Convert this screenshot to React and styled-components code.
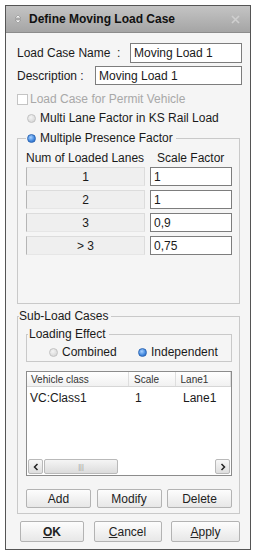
import styled, { createGlobalStyle, css } from "styled-components";

const Global = createGlobalStyle`
  body {
    margin: 0;
    background: #ffffff;
    font-family: "Liberation Sans", Arial, sans-serif;
  }
`;

const Dialog = styled.div`
  margin: 5px;
  width: 246px;
  height: 545px;
  box-sizing: border-box;
  border: 1px solid #555;
  background: #f5f5f5;
  display: flex;
  flex-direction: column;
  font-size: 12px;
  color: #1a1a1a;
`;

const TitleBar = styled.div`
  height: 26px;
  display: flex;
  align-items: center;
  padding: 0 10px 0 8px;
  background: linear-gradient(#c4c4c4, #a5a5a5);
  border-bottom: 1px solid #8c8c8c;
  font-weight: bold;
  font-size: 12px;
  color: #111;
`;

const TitleText = styled.span`
  margin-left: 7px;
  flex: 1;
`;

const Body = styled.div`
  flex: 1;
  display: flex;
  flex-direction: column;
  padding: 10px 8px 0 11px;
`;

const Row = styled.div`
  display: flex;
  align-items: center;
  height: ${(p) => p.h || 20}px;
  margin-top: ${(p) => p.mt || 0}px;
  padding-left: ${(p) => p.pl || 0}px;
`;

const Label = styled.span`
  width: ${(p) => p.w}px;
  flex: none;
  white-space: pre;
`;

const Input = styled.div`
  flex: 1;
  height: 100%;
  box-sizing: border-box;
  border: 1px solid #7d7d7d;
  background: #fff;
  padding: 0 3px;
  display: flex;
  align-items: center;
`;

const CheckBox = styled.span`
  width: 11px;
  height: 11px;
  box-sizing: border-box;
  border: 1px solid #c4c4c4;
  background: #fff;
  margin-right: 2px;
`;

const Disabled = styled.span`
  color: #a8a8a8;
`;

const Radio = styled.span`
  width: 9px;
  height: 9px;
  border-radius: 50%;
  box-sizing: border-box;
  flex: none;
  margin-right: 4px;
  ${(p) =>
    p.on
      ? css`
          border: 1px solid #2f68b5;
          background: radial-gradient(circle at 40% 35%, #a9d1ff, #3f86dd 60%, #2a62b8);
        `
      : css`
          border: 1px solid #c2c2c2;
          background: radial-gradient(circle at 40% 35%, #f4f4f4, #d0d0d0);
        `}
`;

const Group = styled.fieldset`
  margin: ${(p) => p.mt || 0}px ${(p) => p.mr || 0}px 0 0;
  padding: 0 ${(p) => p.pr ?? 7}px ${(p) => p.pb || 0}px ${(p) => p.pl || 8}px;
  min-width: 0;
  border: 1px solid #c9c9c9;
  display: flex;
  flex-direction: column;
`;

const Legend = styled.legend`
  padding: 0 3px 0 ${(p) => p.pl ?? 1}px;
  margin-left: ${(p) => p.ml || 0}px;
  height: 14px;
  line-height: 14px;
  display: flex;
  align-items: center;
`;

const TableHead = styled.div`
  display: flex;
  height: 14px;
  margin-top: 6px;
  align-items: center;
  & > span:first-child {
    width: 131px;
  }
`;

const FactorRow = styled.div`
  display: flex;
  height: 19px;
  margin-top: ${(p) => (p.first ? 2 : 4)}px;
  gap: 5px;
`;

const LaneCell = styled.div`
  width: 119px;
  box-sizing: border-box;
  background: #efefef;
  border: 1px solid #dcdcdc;
  border-left-color: #b5b5b5;
  border-bottom-color: #e6e6e6;
  display: flex;
  align-items: center;
  justify-content: center;
`;

const List = styled.div`
  margin-top: 9px;
  height: 105px;
  box-sizing: border-box;
  border: 1px solid #8c8c8c;
  background: #fff;
  display: flex;
  flex-direction: column;
`;

const ListHead = styled.div`
  display: flex;
  height: 14px;
  border-bottom: 1px solid #d6d6d6;
  background: linear-gradient(#ffffff, #f1f1f1);
  font-size: 10px;
  color: #333;
`;

const HeadCell = styled.div`
  width: ${(p) => p.w}px;
  padding-left: ${(p) => p.pl || 4}px;
  box-sizing: border-box;
  border-right: 1px solid #dedede;
  display: flex;
  align-items: center;
`;

const ListRows = styled.div`
  flex: 1;
`;

const ListRow = styled.div`
  display: flex;
  height: 16px;
  align-items: center;
  margin-top: 3px;
`;

const Cell = styled.div`
  width: ${(p) => p.w}px;
  padding-left: ${(p) => p.pl || 3}px;
  box-sizing: border-box;
`;

const ScrollBar = styled.div`
  height: 15px;
  display: flex;
  align-items: stretch;
  padding: 0 1px 1px 1px;
`;

const ScrollBtn = styled.div`
  width: 15px;
  box-sizing: border-box;
  border: 1px solid #b9b9b9;
  border-radius: 2px;
  background: linear-gradient(#f7f7f7, #dedede);
  display: flex;
  align-items: center;
  justify-content: center;
`;

const Thumb = styled.div`
  width: 74px;
  margin-left: 1px;
  box-sizing: border-box;
  border: 1px solid #b9b9b9;
  border-radius: 2px;
  background: linear-gradient(#f5f5f5, #dcdcdc);
  display: flex;
  align-items: center;
  justify-content: center;
  font-size: 7px;
  color: #999;
`;

const Track = styled.div`
  flex: 1;
`;

const ButtonRow = styled.div`
  display: flex;
  justify-content: space-between;
  margin: ${(p) => p.mt}px ${(p) => p.mr || 0}px 0 ${(p) => p.ml || 0}px;
`;

const Button = styled.div`
  width: ${(p) => p.w}px;
  height: ${(p) => p.h || 19}px;
  box-sizing: border-box;
  border: 1px solid #b3b3b3;
  border-radius: 2px;
  background: linear-gradient(#fdfdfd, #e7e7e7);
  display: flex;
  align-items: center;
  justify-content: center;
  color: #222;
  font-weight: ${(p) => (p.bold ? "bold" : "normal")};
  & u {
    text-decoration-thickness: 1px;
    text-underline-offset: 1px;
  }
`;

const TitleIcon = () => (
  <svg width="8" height="10" viewBox="0 0 8 10">
    <path d="M4 1 L7 4 H1 Z" fill="#f2f2f2" stroke="#8a8a8a" strokeWidth="0.6" />
    <path d="M4 9 L7 6 H1 Z" fill="#f2f2f2" stroke="#8a8a8a" strokeWidth="0.6" />
  </svg>
);

const CloseIcon = () => (
  <svg width="9" height="9" viewBox="0 0 9 9">
    <path d="M1 1 L8 8 M8 1 L1 8" stroke="#cfcfcf" strokeWidth="1.6" />
  </svg>
);

const Arrow = ({ dir }) => (
  <svg width="6" height="8" viewBox="0 0 6 8">
    <path
      d={dir === "left" ? "M4.5 1 L1.5 4 L4.5 7" : "M1.5 1 L4.5 4 L1.5 7"}
      stroke="#222"
      strokeWidth="1.5"
      fill="none"
    />
  </svg>
);

const factors = [
  ["1", "1"],
  ["2", "1"],
  ["3", "0,9"],
  ["> 3", "0,75"],
];

export default function App() {
  return (
    <>
      <Global />
      <Dialog>
        <TitleBar>
          <TitleIcon />
          <TitleText>Define Moving Load Case</TitleText>
          <CloseIcon />
        </TitleBar>
        <Body>
          <Row h={20}>
            <Label w={113}>{"Load Case Name  :"}</Label>
            <Input>Moving Load 1</Input>
          </Row>
          <Row h={19} mt={3}>
            <Label w={78}>{"Description :"}</Label>
            <Input>Moving Load 1</Input>
          </Row>
          <Row h={16} mt={6}>
            <CheckBox />
            <Disabled>Load Case for Permit Vehicle</Disabled>
          </Row>
          <Row h={16} mt={3} pl={10}>
            <Radio />
            <span>Multi Lane Factor in KS Rail Load</span>
          </Row>
          <Group mt={5} mr={2} pb={48}>
            <Legend>
              <Radio on />
              Multiple Presence Factor
            </Legend>
            <TableHead>
              <span>Num of Loaded Lanes</span>
              <span>Scale Factor</span>
            </TableHead>
            {factors.map(([lane, f], i) => (
              <FactorRow key={lane} first={i === 0}>
                <LaneCell>{lane}</LaneCell>
                <Input>{f}</Input>
              </FactorRow>
            ))}
          </Group>
          <Group mt={5} mr={2} pb={5}>
            <Legend ml={-7} pl={0}>Sub-Load Cases</Legend>
            <Group mt={4} pl={22} pr={0} pb={2}>
              <Legend ml={-21} pl={1}>Loading Effect</Legend>
              <Row h={14} mt={4}>
                <Radio />
                <Label w={76}>Combined</Label>
                <Radio on />
                <span>Independent</span>
              </Row>
            </Group>
            <List>
              <ListHead>
                <HeadCell w={103}>Vehicle class</HeadCell>
                <HeadCell w={47} pl={5}>Scale</HeadCell>
                <HeadCell w={56} pl={5}>Lane1</HeadCell>
              </ListHead>
              <ListRows>
                <ListRow>
                  <Cell w={104}>VC:Class1</Cell>
                  <Cell w={47} pl={4}>1</Cell>
                  <Cell w={50} pl={5}>Lane1</Cell>
                </ListRow>
              </ListRows>
              <ScrollBar>
                <ScrollBtn>
                  <Arrow dir="left" />
                </ScrollBtn>
                <Thumb>|||</Thumb>
                <Track />
                <ScrollBtn>
                  <Arrow dir="right" />
                </ScrollBtn>
              </ScrollBar>
            </List>
            <ButtonRow mt={13}>
              <Button w={65}>Add</Button>
              <Button w={65}>Modify</Button>
              <Button w={65}>Delete</Button>
            </ButtonRow>
          </Group>
          <ButtonRow mt={7} ml={3} mr={2}>
            <Button w={64} h={21} bold>
              <span><u>O</u>K</span>
            </Button>
            <Button w={68} h={21}>
              <span><u>C</u>ancel</span>
            </Button>
            <Button w={69} h={21}>
              <span><u>A</u>pply</span>
            </Button>
          </ButtonRow>
        </Body>
      </Dialog>
    </>
  );
}
